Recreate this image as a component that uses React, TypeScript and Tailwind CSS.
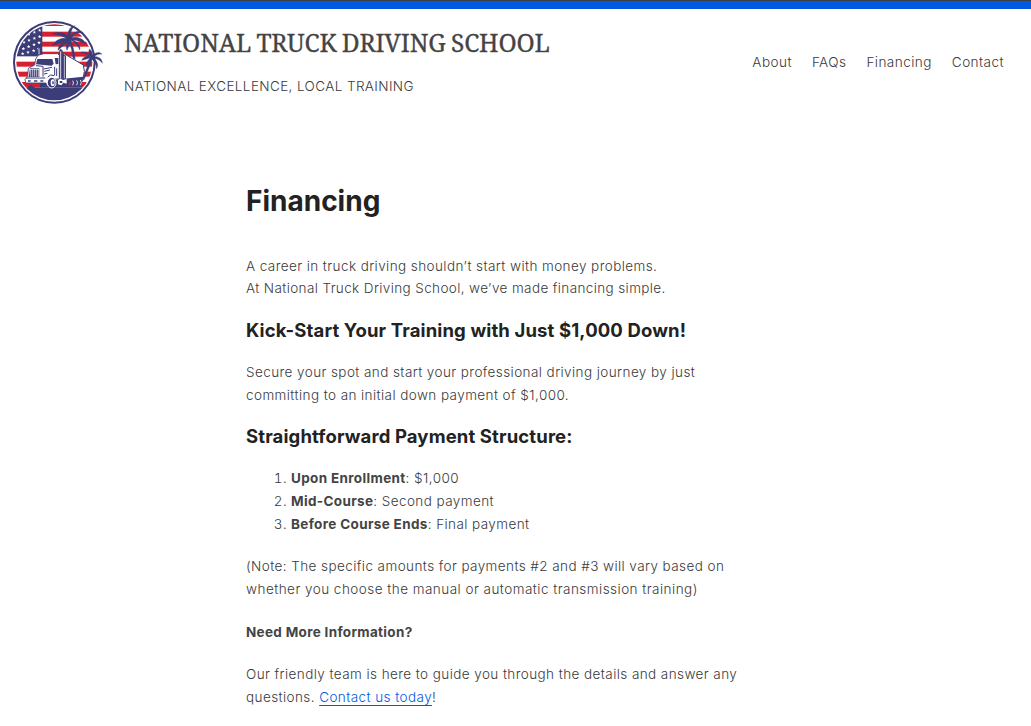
import React from "react";

function Star({ x, y }: { x: number; y: number }) {
  return (
    <path
      transform={`translate(${x} ${y})`}
      d="M0-5.5 1.5-1.8 5.3-1.7 2.3.8 3.3 4.5 0 2.3-3.3 4.5-2.3.8-5.3-1.7-1.5-1.8Z"
      fill="#fff"
    />
  );
}

const stars = [
  [119, 91], [103, 97], [87, 103],
  [119, 110], [103, 115], [87, 121], [72, 127],
  [117, 128], [102, 134], [86, 140], [70, 146],
  [116, 146], [101, 152], [84, 157], [68, 161],
];

function Logo() {
  return (
    <svg viewBox="36 60 276 255" className="h-[85px] w-[92px] shrink-0" aria-hidden="true">
      <defs>
        <clipPath id="disc">
          <circle cx="163" cy="187" r="114" />
        </clipPath>
      </defs>
      <circle cx="163" cy="187" r="121" fill="#fff" stroke="#3c3c78" strokeWidth="6" />
      <g clipPath="url(#disc)">
        <rect x="40" y="60" width="250" height="255" fill="#fff" />
        <g fill="#d7202f">
          <rect x="120" y="64" width="160" height="14" />
          <rect x="120" y="95" width="160" height="15" />
          <rect x="120" y="125" width="160" height="15" />
          <rect x="120" y="155" width="160" height="15" />
          <rect x="40" y="185" width="240" height="15" />
          <rect x="40" y="215" width="240" height="15" />
          <rect x="40" y="246" width="240" height="15" />
        </g>
        <rect x="40" y="60" width="87" height="109" fill="#3c3c78" />
        {stars.map(([x, y]) => (
          <Star key={`${x}-${y}`} x={x} y={y} />
        ))}
        <path d="M40 262H82L92 254 104 262H290V315H40Z" fill="#3c3c78" />
      </g>
      <g fill="#3c3c78" stroke="#3c3c78" strokeWidth="1">
        <path d="M205 119 212 117Q222 145 226 178L219 175Q216 145 205 119Z" />
        <path d="M206 119C193 111 171 114 158 136C176 131 192 126 205 122C184 126 173 140 174 151C187 138 199 131 207 123C197 134 198 143 201 151C207 139 211 129 211 121C226 126 234 137 239 150C244 139 232 125 218 119C232 121 247 126 257 132C252 115 230 109 216 113C221 101 235 96 250 99C242 90 222 93 211 108C213 94 215 85 225 77C210 79 203 93 204 108C192 96 174 95 156 101C171 103 188 107 206 119Z" />
        <path d="M271 173 277 176C272 194 263 213 253 238L246 242C254 219 264 196 271 173Z" />
        <path d="M274 171C264 164 250 169 245 181C255 179 265 176 271 175C262 182 257 191 260 200C267 192 272 184 276 178C284 186 290 195 289 207C298 197 291 182 282 175C291 176 300 180 307 190C307 175 295 169 283 170C289 163 298 161 306 163C299 154 286 157 279 166C277 158 275 152 268 147C265 155 267 163 273 167C264 158 250 154 242 157C252 159 264 164 274 171Z" />
      </g>
      <path d="M190 160 250 195Q257 213 249 236L191 240Z" fill="#fff" stroke="#3c3c78" strokeWidth="3" />
      <path d="M180 160 198 167V236H180Z" fill="#3c3c78" />
      <path d="M193 168V235" stroke="#fff" strokeWidth="2" />
      <path d="M191 236 250 230 244 262H120V244Z" fill="#3c3c78" />
      <path d="M114 166 131 161H173L178 166V237H165L148 258H140L138 249 77 249 75 238 83 230 85 205 104 195 107 177Z" fill="#fff" stroke="#3c3c78" strokeWidth="2.5" />
      <path d="M112 177H157L161 191 155 197 108 193Z" fill="#3c3c78" />
      <path d="M164 174H175V192L167 193Z" fill="#3c3c78" />
      <path d="M90 205H118V231H86Z" fill="#3c3c78" />
      <path d="M92 207V230M98 207V230M104 207V230M110 207V230M116 207V230M88 208H118" stroke="#fff" strokeWidth="2" />
      <path d="M108 197 129 199V230M131 207 156 202M133 214 150 210M132 222 142 220M164 200V226M170 205V228" fill="none" stroke="#3c3c78" strokeWidth="3" />
      <path d="M77 234H136M143 231Q151 221 163 227" fill="none" stroke="#3c3c78" strokeWidth="3" />
      <path d="M84 243H92M102 243H112M121 243H130" stroke="#3c3c78" strokeWidth="4" />
      <path d="M114 164V144L117 138 122 145V164ZM178 239V151L182 146 188 152V239Z" fill="#3c3c78" />
      <path d="M117 145V163M182 154V236" stroke="#fff" strokeWidth="2.5" />
      <ellipse cx="155" cy="248" rx="13" ry="16" fill="#3c3c78" stroke="#fff" strokeWidth="3" />
      <ellipse cx="158" cy="248" rx="6" ry="10" fill="#fff" />
      <ellipse cx="159" cy="248" rx="2.5" ry="5" fill="#3c3c78" />
      <path d="M174 241 180 236 190 240 200 237V251L190 248 184 256 174 253Z" fill="#fff" />
      <path d="M179 243H187V249H179Z" fill="#3c3c78" />
      <path d="M218 242Q223 248 218 256M230 241Q235 247 230 256M241 240Q247 247 241 256" fill="none" stroke="#fff" strokeWidth="2.5" />
      <path d="M207 247 212 245V256H207Z" fill="#d7202f" />
    </svg>
  );
}

const links = ["About", "FAQs", "Financing", "Contact"];

export default function App() {
  return (
    <div className="h-[726px] overflow-hidden bg-white font-['Inter',sans-serif] text-[13.5px] leading-[23px] font-light tracking-[0.42px] text-[#3a3a3a]">
      <div className="h-[9px] border-t border-[#3c4043] bg-[#0059e3]" />
      <header className="flex h-[107px] items-start justify-between pr-[27px] pl-3">
        <div className="flex pt-[11px]">
          <Logo />
          <div className="ml-5 pt-[3px]">
            <div className="font-['Noto_Serif','Liberation_Serif',serif] text-[24.5px] leading-[40px] font-normal tracking-[-0.1px] [word-spacing:-1px] whitespace-nowrap text-[#444] [-webkit-text-stroke:0.3px_#444]">
              NATIONAL TRUCK DRIVING SCHOOL
            </div>
            <p className="mt-3 tracking-[0.39px] whitespace-nowrap">NATIONAL EXCELLENCE, LOCAL TRAINING</p>
          </div>
        </div>
        <nav className="flex gap-5 pt-[42px] text-[13.6px]">
          {links.map((label) => (
            <a key={label} href="#">{label}</a>
          ))}
        </nav>
      </header>
      <main className="ml-[246px] w-[540px] pt-[68px] whitespace-nowrap">
        <h1 className="text-[28px] leading-[34px] font-bold text-[#222] tracking-normal [font-optical-sizing:none]">Financing</h1>
        <p className="mt-[37px] leading-[22px]">
          A career in truck driving shouldn’t start with money problems.
          <br />
          <span className="tracking-[0.38px]">At National Truck Driving School, we’ve made financing simple.</span>
        </p>
        <h2 className="mt-[19px] text-[18.5px] leading-[24px] font-bold tracking-[0.13px] text-[#222] [font-optical-sizing:none]">
          Kick-Start Your Training with Just $1,000 Down!
        </h2>
        <p className="mt-[19px]">
          Secure your spot and start your professional driving journey by just
          <br />
          committing to an initial down payment of $1,000.
        </p>
        <h2 className="mt-[17px] text-[18.5px] leading-[24px] font-bold tracking-[0.13px] text-[#222] [font-optical-sizing:none]">
          Straightforward Payment Structure:
        </h2>
        <ol className="mt-[19px] list-decimal pl-[45px]">
          <li><strong className="font-bold tracking-[0.35px] text-[#444]">Upon Enrollment</strong>: $1,000</li>
          <li><strong className="font-bold tracking-[0.35px] text-[#444]">Mid-Course</strong>: Second payment</li>
          <li><strong className="font-bold tracking-[0.35px] text-[#444]">Before Course Ends</strong>: Final payment</li>
        </ol>
        <p className="mt-[19px]">
          (Note: The specific amounts for payments #2 and #3 will vary based on
          <br />
          <span className="tracking-[0.47px]">whether you choose the manual or automatic transmission training)</span>
        </p>
        <p className="mt-5 font-bold tracking-[0.32px] text-[#444]">Need More Information?</p>
        <p className="mt-[19px]">
          Our friendly team is here to guide you through the details and answer any
          <br />
          questions.{" "}
          <a href="#" className="text-[#0059e3] underline underline-offset-[3px]">Contact us today</a>!
        </p>
      </main>
    </div>
  );
}
